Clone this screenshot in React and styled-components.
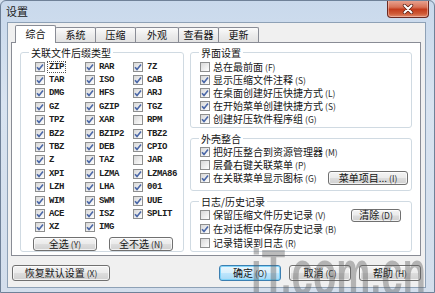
import React from 'react';
import styled, { createGlobalStyle, css } from 'styled-components';

const cjk = `"Noto Sans CJK SC", "Noto Sans", sans-serif`;

const Global = createGlobalStyle`
  html, body { margin: 0; padding: 0; width: 435px; height: 293px; overflow: hidden; background: #d4e0ee; }
  #root { width: 435px; height: 293px; }
  * { box-sizing: border-box; }
`;

const Window = styled.div`
  position: relative;
  width: 435px;
  height: 293px;
  display: flex;
  flex-direction: column;
  background: linear-gradient(180deg, #c9d9ec 0%, #d8e3f0 35%, #d3deec 100%);
  border: 1px solid #6f8198;
  border-radius: 6px 6px 0 0;
  overflow: hidden;
  font-family: ${cjk};
  color: #141414;
`;

const TitleBar = styled.div`
  height: 21px;
  flex: none;
  display: flex;
  align-items: flex-start;
  justify-content: space-between;
  padding-left: 5px;
`;

const Title = styled.span`
  font-size: 11px;
  line-height: 12px;
  margin-top: 4px;
  color: #1b1b1b;
`;

const CloseBtn = styled.div`
  width: 42px;
  height: 18px;
  margin-top: -1px;
  margin-right: 5px;
  border: 1px solid #6b2a22;
  border-top: none;
  border-radius: 0 0 4px 4px;
  background: linear-gradient(180deg, #eaa897 0%, #d87257 42%, #c33c1d 55%, #cf5a36 80%, #e08a6c 100%);
  box-shadow: inset 0 0 0 1px rgba(255, 220, 210, 0.45);
  display: flex;
  align-items: center;
  justify-content: center;
`;

const Client = styled.div`
  flex: 1;
  margin: 0 8px 4px 6px;
  background: #f0f0f0;
  border: 1px solid #8ea1b6;
  display: flex;
  flex-direction: column;
  padding: 2px 4px 6px 3px;
`;

const TabRow = styled.div`
  height: 17px;
  flex: none;
  display: flex;
  align-items: flex-end;
  padding-left: 4px;
`;

const Tab = styled.div`
  width: ${(p) => p.$w}px;
  height: 15px;
  margin-left: -1px;
  border: 1px solid #898c95;
  border-bottom: none;
  border-radius: 2px 2px 0 0;
  background: linear-gradient(180deg, #fbfbfb 0%, #ececec 50%, #e2e2e2 100%);
  font-size: 10px;
  line-height: 13px;
  text-align: center;
  color: #111;
  &:first-child { margin-left: 0; }
  ${(p) =>
    p.$active &&
    css`
      position: relative;
      z-index: 1;
      height: 18px;
      margin-bottom: -1px;
      background: #ffffff;
      line-height: 16px;
    `}
`;

const Panel = styled.div`
  height: 214px;
  flex: none;
  background: #ffffff;
  border: 1px solid #898c95;
  display: flex;
  gap: 6px;
  padding: 4px 8px 0 8px;
`;

const Group = styled.fieldset`
  margin: 0;
  padding: 0;
  min-width: 0;
  border: 1px solid #d0dae2;
  border-radius: 3px;
  width: ${(p) => p.$w || 'auto'};
  height: ${(p) => p.$h}px;
  display: flex;
  flex-direction: column;
  flex: none;
`;

const Legend = styled.legend`
  font-size: 10px;
  line-height: 11px;
  padding: 0 2px;
  margin-left: 8px;
  color: #141414;
`;

const ExtGrid = styled.div`
  display: grid;
  grid-template-columns: 50px 48px 1fr;
  grid-auto-rows: 13.4px;
  margin: 2px 0 0 14px;
`;

const ExtItem = styled.div`
  display: flex;
  align-items: center;
  gap: 3px;
`;

const ExtLabel = styled.span`
  font-family: "Liberation Mono", "DejaVu Sans Mono", monospace;
  font-weight: bold;
  font-size: 9px;
  line-height: 10px;
  letter-spacing: -0.4px;
  color: #202020;
  padding: 0 1px;
  ${(p) =>
    p.$focus &&
    css`
      outline: 1px dotted #555;
      outline-offset: 0px;
    `}
`;

const SelectRow = styled.div`
  display: flex;
  gap: 12px;
  margin: 3px 0 0 12px;
`;

const Button = styled.div`
  width: ${(p) => p.$w}px;
  height: ${(p) => p.$h || 16}px;
  flex: none;
  border: 1px solid #707070;
  border-radius: 3px;
  background: linear-gradient(180deg, #f4f4f4 0%, #ebebeb 48%, #dddddd 52%, #d0d0d0 100%);
  box-shadow: inset 0 0 0 1px rgba(255, 255, 255, 0.7);
  display: flex;
  align-items: center;
  justify-content: center;
  font-size: 10px;
  line-height: 10px;
  color: #141414;
  white-space: nowrap;
  margin-left: ${(p) => p.$ml || '0'};
  margin-right: ${(p) => p.$mr || 0}px;
  ${(p) =>
    p.$default &&
    css`
      border-color: #3c7fb1;
      background: linear-gradient(180deg, #eaf6fd 0%, #d9f0fc 48%, #bee6fd 52%, #a7d9f5 100%);
      box-shadow: inset 0 0 0 1px rgba(120, 210, 250, 0.9);
    `}
`;

const RightCol = styled.div`
  width: 222px;
  display: flex;
  flex-direction: column;
  gap: 5px;
`;

const OptRow = styled.div`
  height: ${(p) => p.$h || 13}px;
  display: flex;
  align-items: center;
  gap: 3px;
  padding-left: 9px;
  flex: none;
`;

const OptText = styled.span`
  font-size: 10px;
  line-height: 11px;
  white-space: nowrap;
  color: #141414;
`;

const Key = styled.span`
  font-size: 8.5px;
  margin-left: 2px;
  color: #2a2a2a;
`;

const Rows = styled.div`
  display: flex;
  flex-direction: column;
  padding-top: ${(p) => p.$pt || 0}px;
`;

const BottomBar = styled.div`
  margin-top: 9px;
  display: flex;
  gap: 8px;
  align-items: center;
`;

const Box = styled.span`
  width: 10px;
  height: 10px;
  flex: none;
  border: 1px solid #8e8f8f;
  background: linear-gradient(135deg, #d8d8d8 0%, #ededed 55%, #ffffff 100%);
  display: flex;
  align-items: center;
  justify-content: center;
`;

const Watermark = styled.div`
  position: absolute;
  left: 250px;
  top: 240px;
  font-family: "Liberation Sans", Arial, sans-serif;
  font-weight: bold;
  font-size: 64px;
  line-height: 64px;
  color: rgba(95, 95, 95, 0.42);
  transform: scaleX(0.6);
  transform-origin: left top;
  white-space: nowrap;
  pointer-events: none;
`;

const CheckBox = ({ checked }) => (
  <Box>
    {checked && (
      <svg width="8" height="8" viewBox="0 0 8 8">
        <path d="M1 4.2 L3 6.4 L7 1.4" fill="none" stroke="#4b68a8" strokeWidth="1.6" />
      </svg>
    )}
  </Box>
);

const Label = ({ text, k }) => (
  <OptText>
    {text}
    <Key>({k})</Key>
  </OptText>
);

const exts = [
  ['ZIP', 1], ['RAR', 1], ['7Z', 1],
  ['TAR', 1], ['ISO', 1], ['CAB', 1],
  ['DMG', 1], ['HFS', 1], ['ARJ', 1],
  ['GZ', 1], ['GZIP', 1], ['TGZ', 1],
  ['TPZ', 1], ['XAR', 1], ['RPM', 0],
  ['BZ2', 1], ['BZIP2', 1], ['TBZ2', 1],
  ['TBZ', 1], ['DEB', 1], ['CPIO', 1],
  ['Z', 1], ['TAZ', 1], ['JAR', 0],
  ['XPI', 1], ['LZMA', 1], ['LZMA86', 1],
  ['LZH', 1], ['LHA', 1], ['001', 1],
  ['WIM', 1], ['SWM', 1], ['UUE', 1],
  ['ACE', 1], ['ISZ', 1], ['SPLIT', 1],
  ['XZ', 1], ['IMG', 1],
];

const tabs = [
  ['综合', 41], ['系统', 41], ['压缩', 41], ['外观', 44], ['查看器', 41], ['更新', 41],
];

export default function App() {
  return (
    <>
      <Global />
      <Window>
        <TitleBar>
          <Title>设置</Title>
          <CloseBtn>
            <svg width="12" height="10" viewBox="0 0 12 10">
              <path d="M2.5 1.5 L9.5 8.5 M9.5 1.5 L2.5 8.5" stroke="#5a1e14" strokeWidth="3.4" strokeLinecap="round" />
              <path d="M2.5 1.5 L9.5 8.5 M9.5 1.5 L2.5 8.5" stroke="#ffffff" strokeWidth="2" strokeLinecap="round" />
            </svg>
          </CloseBtn>
        </TitleBar>
        <Client>
          <TabRow>
            {tabs.map(([t, w], i) => (
              <Tab key={t} $w={w} $active={i === 0}>
                {t}
              </Tab>
            ))}
          </TabRow>
          <Panel>
            <Group $w="164px" $h={205}>
              <Legend>关联文件后缀类型</Legend>
              <ExtGrid>
                {exts.map(([e, c], i) => (
                  <ExtItem key={e}>
                    <CheckBox checked={!!c} />
                    <ExtLabel $focus={i === 0}>{e}</ExtLabel>
                  </ExtItem>
                ))}
              </ExtGrid>
              <SelectRow>
                <Button $w={64} $h={14}>
                  全选<Key>(Y)</Key>
                </Button>
                <Button $w={64} $h={14}>
                  全不选<Key>(N)</Key>
                </Button>
              </SelectRow>
            </Group>
            <RightCol>
              <Group $h={81}>
                <Legend>界面设置</Legend>
                <Rows $pt={2}>
                  <OptRow><CheckBox /><Label text="总在最前面" k="F" /></OptRow>
                  <OptRow><CheckBox checked /><Label text="显示压缩文件注释" k="S" /></OptRow>
                  <OptRow><CheckBox checked /><Label text="在桌面创建好压快捷方式" k="L" /></OptRow>
                  <OptRow><CheckBox checked /><Label text="在开始菜单创建快捷方式" k="S" /></OptRow>
                  <OptRow><CheckBox checked /><Label text="创建好压软件程序组" k="G" /></OptRow>
                </Rows>
              </Group>
              <Group $h={58}>
                <Legend>外壳整合</Legend>
                <Rows $pt={1}>
                  <OptRow><CheckBox checked /><Label text="把好压整合到资源管理器" k="M" /></OptRow>
                  <OptRow><CheckBox /><Label text="层叠右键关联菜单" k="P" /></OptRow>
                  <OptRow $h={14}>
                    <CheckBox checked />
                    <Label text="在关联菜单显示图标" k="G" />
                    <Button $w={80} $h={14} $ml="auto" $mr={3}>
                      菜单项目...<Key>(I)</Key>
                    </Button>
                  </OptRow>
                </Rows>
              </Group>
              <Group $h={56}>
                <Legend>日志/历史记录</Legend>
                <Rows $pt={1}>
                  <OptRow $h={14}>
                    <CheckBox />
                    <Label text="保留压缩文件历史记录" k="V" />
                    <Button $w={50} $h={13} $ml="auto" $mr={10}>
                      清除<Key>(D)</Key>
                    </Button>
                  </OptRow>
                  <OptRow $h={14}><CheckBox checked /><Label text="在对话框中保存历史记录" k="B" /></OptRow>
                  <OptRow $h={14}><CheckBox /><Label text="记录错误到日志" k="R" /></OptRow>
                </Rows>
              </Group>
            </RightCol>
          </Panel>
          <BottomBar>
            <Button $w={98} $ml="1px">
              恢复默认设置<Key>(X)</Key>
            </Button>
            <Button $w={62} $ml="auto" $default>
              确定<Key>(O)</Key>
            </Button>
            <Button $w={62}>
              取消<Key>(C)</Key>
            </Button>
            <Button $w={62}>
              帮助<Key>(H)</Key>
            </Button>
          </BottomBar>
        </Client>
        <Watermark>iT.com.cn</Watermark>
      </Window>
    </>
  );
}
